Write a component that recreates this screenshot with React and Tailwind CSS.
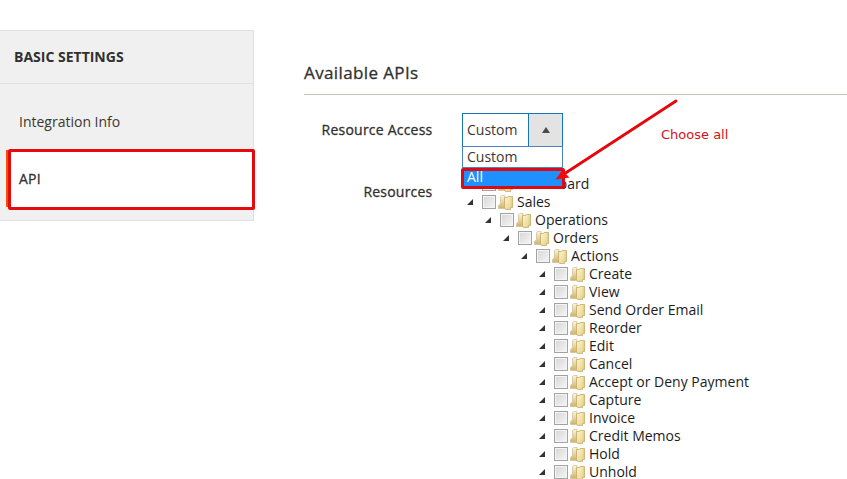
const rows = [
  { label: 'Dashboard', depth: 0 },
  { label: 'Sales', depth: 0 },
  { label: 'Operations', depth: 1 },
  { label: 'Orders', depth: 2 },
  { label: 'Actions', depth: 3 },
  { label: 'Create', depth: 4 },
  { label: 'View', depth: 4 },
  { label: 'Send Order Email', depth: 4 },
  { label: 'Reorder', depth: 4 },
  { label: 'Edit', depth: 4 },
  { label: 'Cancel', depth: 4 },
  { label: 'Accept or Deny Payment', depth: 4 },
  { label: 'Capture', depth: 4 },
  { label: 'Invoice', depth: 4 },
  { label: 'Credit Memos', depth: 4 },
  { label: 'Hold', depth: 4 },
  { label: 'Unhold', depth: 4 },
];

const indent = ['pl-0', 'pl-[18px]', 'pl-[36px]', 'pl-[54px]', 'pl-[72px]'];

function Folder() {
  return (
    <svg className="ml-[2px] h-[15px] w-[15px] shrink-0" viewBox="0 0 15 15">
      <defs>
        <linearGradient id="front" x1="0" y1="0" x2="1" y2="1">
          <stop offset="0" stopColor="#fdf5cc" />
          <stop offset="1" stopColor="#e6d08a" />
        </linearGradient>
        <linearGradient id="back" x1="0" y1="0" x2="0" y2="1">
          <stop offset="0" stopColor="#faf6e2" />
          <stop offset="1" stopColor="#cfb266" />
        </linearGradient>
      </defs>
      <path d="M2.500 1.500 L3.500 .5 H7 V13.500 H.5 V10.500 L2.500 8.500 Z" fill="url(#back)" stroke="#d0bf90" strokeWidth=".7" />
      <path d="M6.500 2.500 H9.500 L10 1.500 H14.500 V12.500 H12.500 V14.400 H7.500 L6.500 13 Z" fill="url(#front)" stroke="#c4aa62" strokeWidth=".8" />
      <path d="M13.300 2.300 V12" stroke="#dcc887" strokeWidth=".7" />
    </svg>
  );
}

function TreeRow({ label, depth }) {
  return (
    <li className={'flex h-[18px] items-center ' + indent[depth]}>
      <svg className="ml-[5px] h-[6px] w-[6px] shrink-0" viewBox="0 0 6 6">
        <path d="M6 0 V6 H0 Z" fill="#333" />
      </svg>
      <span className="ml-[9px] h-[14px] w-[14px] shrink-0 border border-[#a3a3a3] bg-linear-to-br from-[#d6d6d8] to-[#f6f6f6] shadow-[inset_0_0_0_1px_#f4f4f4]" />
      <Folder />
      <span className="ml-[4px] whitespace-nowrap leading-[14px] text-[#1c1c1c]">{label}</span>
    </li>
  );
}

function Sidebar() {
  return (
    <aside className="mt-[30px] h-[191px] w-[254px] shrink-0 border-y border-r border-[#e1e1e1] bg-[#f0f0f0]">
      <h2 className="flex h-[53px] items-center border-b border-[#e1e1e1] pb-[2px] pl-[14px] text-[14px] font-bold text-[#303030]">
        BASIC SETTINGS
      </h2>
      <nav className="pt-[9px]">
        <div className="flex h-[57px] items-center pl-[19px]">Integration Info</div>
        <div className="relative ml-[6px] flex h-[57px] items-center border-l-2 border-[#eb5202] bg-white pl-[11px] tracking-[0.2px] text-[#303030] [-webkit-text-stroke:0.3px_#303030]">
          API
          <span className="absolute -top-px -right-[2px] left-0 h-[61px] rounded-[2px] border-3 border-[#e60a0f]" />
        </div>
      </nav>
    </aside>
  );
}

function FieldLabel({ children }) {
  return (
    <div className="w-[128.500px] text-right leading-[34px] tracking-[0.22px] whitespace-nowrap text-[#303030] [-webkit-text-stroke:0.3px_#303030]">
      {children}
    </div>
  );
}

function Select() {
  return (
    <div className="relative z-10 h-[34px] w-[101px]">
      <div className="flex h-[34px] border border-[#1674b8] bg-white">
        <span className="flex-1 pl-1 leading-[32px]">Custom</span>
        <span className="flex w-[34px] items-center justify-center border-l border-[#1674b8] bg-[#e3e3e3]">
          <svg className="h-[6px] w-[8px]" viewBox="0 0 8 6">
            <path d="M4 0 L8 6 H0 Z" fill="#514943" />
          </svg>
        </span>
      </div>
      <div className="absolute top-[33px] left-0 w-[101px]">
        <div className="h-[22px] border border-[#4b83bf] bg-white pl-1 leading-[20px]">Custom</div>
        <div className="-ml-px h-[21px] w-[104px] rounded-[2px] border-3 border-[#dc0a14] bg-[#1e90ff] pl-[3px] leading-[11px] text-white">
          All
        </div>
      </div>
    </div>
  );
}

export default function App() {
  return (
    <div className="relative flex h-[479px] w-[847px] overflow-hidden bg-white font-['Open_Sans',sans-serif] text-[14px] text-[#41362f]">
      <Sidebar />
      <main className="ml-[50px] flex-1">
        <h1 className="h-[95px] border-b border-[#c9c4b0] pt-[62px] text-[17px] leading-[22px] tracking-[0.38px] text-[#303030] [-webkit-text-stroke:0.3px_#303030]">
          Available APIs
        </h1>
        <div className="flex pt-[18px]">
          <FieldLabel>Resource Access</FieldLabel>
          <div className="ml-[29.500px]">
            <Select />
          </div>
        </div>
        <div className="flex pt-[28px]">
          <FieldLabel>Resources</FieldLabel>
          <ul className="ml-[29.500px]">
            {rows.map((row) => (
              <TreeRow key={row.label} {...row} />
            ))}
          </ul>
        </div>
      </main>
      <svg className="absolute top-[95px] left-[550px] z-20 h-[90px] w-[135px]" viewBox="0 0 135 90">
        <path d="M126 6 L14 79" stroke="#e8060c" strokeWidth="2.800" strokeLinecap="round" />
        <path d="M5.500 84.500 L13.500 73.500 L15 78 L19.500 82.500 Z" fill="#ff0505" />
      </svg>
      <span className="absolute top-[126px] left-[661px] font-['DejaVu_Sans',sans-serif] text-[13px] leading-[18px] whitespace-nowrap text-[#d81118]">
        Choose all
      </span>
    </div>
  );
}
